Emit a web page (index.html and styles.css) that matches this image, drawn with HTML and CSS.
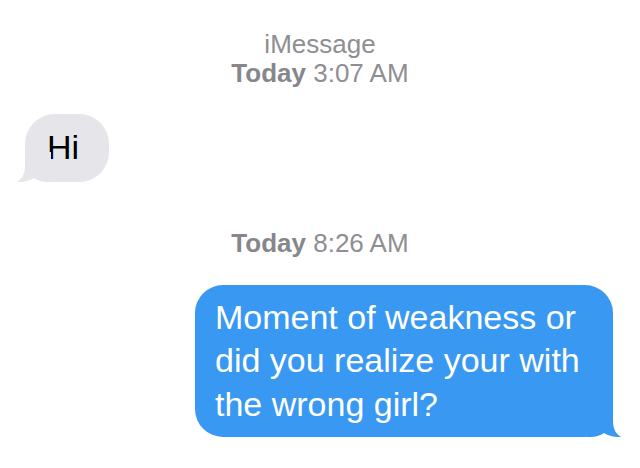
FILE: index.html
```html
<!DOCTYPE html>
<html lang="en">
<head>
    <meta charset="UTF-8">
    <meta name="viewport" content="width=device-width, initial-scale=1.0">
    <title>Messages</title>
    <link rel="stylesheet" href="styles.css">
</head>
<body>
    <div class="thread">
        <!-- first timestamp -->
        <div class="stamp stamp-top">
            <div>iMessage</div>
            <div><b>Today</b> 3:07 AM</div>
        </div>

        <div class="row row-in">
            <div class="bubble bubble-in">
                Hi
                <svg class="tail tail-in" width="34" height="30" viewBox="0 0 34 30">
                    <path d="M8 0 V14 C8 22 5 27 0 30 C7 30.5 13 28.5 17 26 C21 28.5 25 30 32 30 H34 V0 Z" fill="#e5e5ea"/>
                </svg>
            </div>
        </div>

        <!-- second timestamp -->
        <div class="stamp stamp-mid">
            <div><b>Today</b> 8:26 AM</div>
        </div>

        <div class="row row-out">
            <div class="bubble bubble-out">
                Moment of weakness or did you realize your with the wrong girl?
                <svg class="tail tail-out" width="34" height="30" viewBox="0 0 34 30">
                    <path d="M8 0 V14 C8 22 5 27 0 30 C7 30.5 13 28.5 17 26 C21 28.5 25 30 32 30 H34 V0 Z" fill="#3898f2"/>
                </svg>
            </div>
        </div>
    </div>
</body>
</html>
```

FILE: styles.css
```css
body {
    margin: 0;
    padding: 0;
    background-color: #ffffff;
    font-family: "Liberation Sans", Arial, sans-serif;
}

.thread {
    display: flex;
    flex-direction: column;
}

.stamp {
    text-align: center;
    font-size: 26px;
    line-height: 29px;
    color: #8e8e93;
}

.stamp b {
    font-weight: bold;
    color: #86868b;
}

.stamp-top {
    margin-top: 30px;
}

.stamp-mid {
    margin-top: 47px;
}

.row {
    display: flex;
}

.row-in {
    justify-content: flex-start;
    margin-top: 26px;
}

.row-out {
    justify-content: flex-end;
    margin-top: 27px;
}

.bubble {
    position: relative;
    font-size: 34px;
    line-height: 43.5px;
    border-radius: 30px;
}

.bubble-in {
    margin-left: 25px;
    padding: 12px 30px 12px 22px;
    background-color: #e5e5ea;
    color: #000000;
}

.bubble-out {
    box-sizing: border-box;
    width: 418px;
    margin-right: 27px;
    padding: 11px 20px;
    background-color: #3898f2;
    color: #ffffff;
    border-radius: 28px;
}

.tail {
    position: absolute;
    bottom: 0;
}

.tail-in {
    left: -8px;
}

.tail-out {
    right: -8px;
    transform: scaleX(-1);
}
```
